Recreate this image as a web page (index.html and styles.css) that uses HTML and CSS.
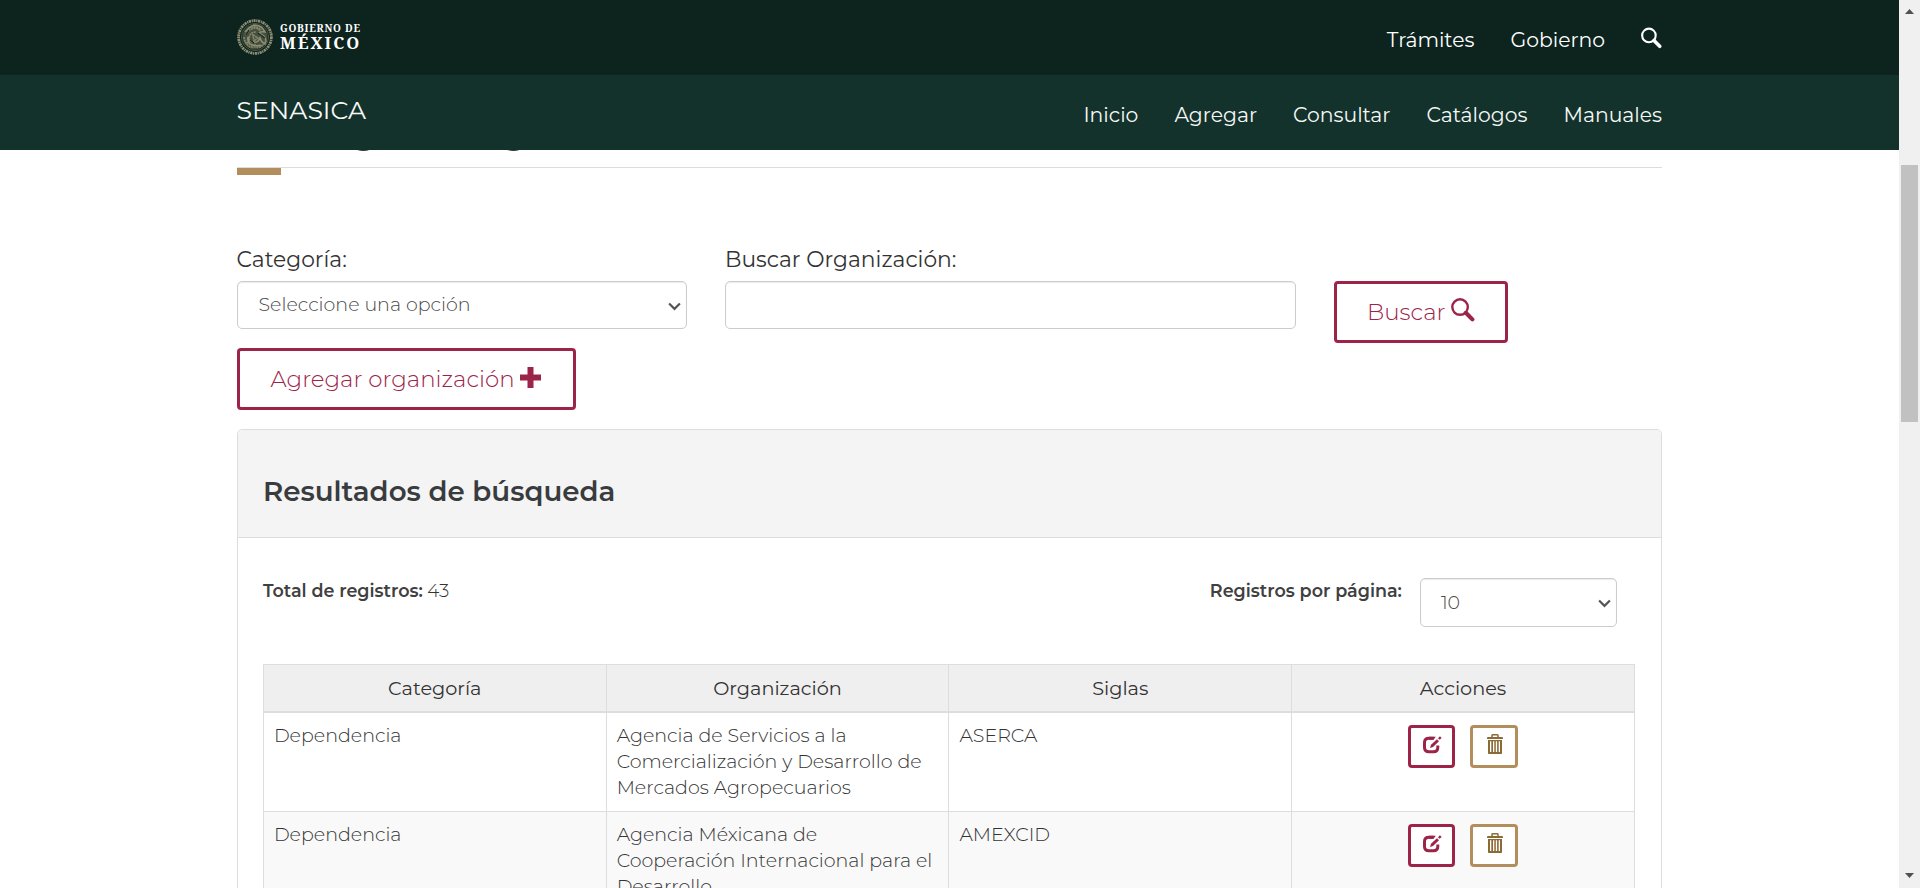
FILE: index.html
```html
<!DOCTYPE html>
<html lang="es">
<head>
<meta charset="utf-8">
<title>SENASICA</title>
<link rel="stylesheet" href="styles.css">
</head>
<body>
<svg class="defs" width="0" height="0">
  <symbol id="search" viewBox="0 0 22 22"><circle cx="8.3" cy="8.3" r="7.100" fill="none" stroke="currentColor" stroke-width="2.200"/><path d="M13.6 13.6l6 6" stroke="currentColor" stroke-width="3.800" stroke-linecap="round"/></symbol>
  <symbol id="edit" viewBox="0 0 19 18"><path d="M10.500 2.200H6Q1.500 2.200 1.500 6.500V11.500Q1.500 15.800 6 15.800H10.500Q14.800 15.800 14.800 11.500V9.500" fill="none" stroke="currentColor" stroke-width="3"/><path d="M6 .7h6.800L10.600 3.700H6z" fill="currentColor"/><path d="M7 12l1-3.200 6-5.600 2 2-6 5.800z" fill="currentColor"/><path d="M15 2.200L17 .3l1.600 1.700-1.900 1.800z" fill="currentColor"/></symbol>
  <symbol id="trash" viewBox="0 0 16 20"><path d="M5 3V1.500Q5 .8 6 .8h4q1 0 1 .7V3" fill="none" stroke="currentColor" stroke-width="1.500"/><path d="M0 5V3.600L1.200 3h13.600L16 3.600V5z" fill="currentColor"/><path fill-rule="evenodd" d="M1 6h14v13.300q0 .7-.7.7H1.700Q1 20 1 19.300zM3 7.200V18h1.300V7.200zM6 7.200V18h1.300V7.200zM8.800 7.200V18h1.300V7.200zM11.700 7.200V18H13V7.200z" fill="currentColor"/></symbol>
</svg>
<div class="window">
  <div class="page">
    <header class="top">
      <div class="brand">
        <svg class="seal" viewBox="0 0 36 36" fill="none" stroke="#8f8f74">
          <circle cx="18" cy="18" r="16.400" stroke-width="2.800" stroke-dasharray="2.200 .7 1.200 .6"/>
          <circle cx="18" cy="18" r="12.500" stroke="none" fill="#454f3f"/>
          <circle cx="18" cy="18" r="13.600" stroke="#5b644f" stroke-width=".8"/>
          <path d="M8 13q4-5 9-7 8 0 11 7-4-1-6 1l5 3q3 4 1 8-4-2-5-6-2 5-6 4-5 0-6-5-1 4 2 7 6 3 11 1" stroke-width="1.500"/>
          <path d="M7 18q1 7 6 10h10q4-2 6-6M9 16q2-5 8-7 5 0 7 4M12 19q1-6 7-6M10 23q4 4 9 3M14 8q6-1 10 3M16 16l5 3-4 3z" stroke="#85876b" stroke-width="1.700" stroke-dasharray="2 .6"/>
          <path d="M21 14l7 5M12 11l-3 5M13 21l4 3" stroke="#17291f" stroke-width="1.300"/>
        </svg>
        <div class="brand-text"><span class="gob">GOBIERNO DE</span><span class="mex">MÉXICO</span></div>
      </div>
      <nav class="links links-top"><a>Trámites</a><a>Gobierno</a><svg class="top-search"><use href="#search"/></svg></nav>
    </header>
    <header class="sub">
      <div class="site">SENASICA</div>
      <nav class="links"><a>Inicio</a><a>Agregar</a><a>Consultar</a><a>Catálogos</a><a>Manuales</a></nav>
    </header>
    <main class="content">
      <div class="title-clip"><h1>Catálogo de organizaciones</h1></div>
      <div class="rule"></div>
      <form class="filters">
        <div class="field cat"><label>Categoría:</label><div class="control">Seleccione una opción<svg class="chev" viewBox="0 0 12 8"><path d="M1 1.200l5 5 5-5"/></svg></div></div>
        <div class="field org"><label>Buscar Organización:</label><div class="control"></div></div>
        <div class="btn search-btn">Buscar<svg class="btn-search"><use href="#search"/></svg></div>
      </form>
      <div class="btn add-btn">Agregar organización<svg class="plus" viewBox="0 0 21 21"><path d="M7.500 0h6v7.500H21v6h-7.500V21h-6v-7.500H0v-6h7.500z" fill="currentColor"/></svg></div>
      <section class="panel">
        <div class="panel-head"><h2>Resultados de búsqueda</h2></div>
        <div class="panel-body">
          <div class="bar">
            <div class="total"><b>Total de registros:</b> <span>43</span></div>
            <div class="per"><b>Registros por página:</b><div class="control">10<svg class="chev" viewBox="0 0 12 8"><path d="M1 1.200l5 5 5-5"/></svg></div></div>
          </div>
          <table class="grid">
            <thead><tr><th>Categoría</th><th>Organización</th><th>Siglas</th><th>Acciones</th></tr></thead>
            <tbody>
              <tr><td>Dependencia</td><td>Agencia de Servicios a la<br>Comercialización y Desarrollo de<br>Mercados Agropecuarios</td><td>ASERCA</td>
                <td><div class="acts"><span class="act edit"><svg><use href="#edit"/></svg></span><span class="act del"><svg><use href="#trash"/></svg></span></div></td></tr>
              <tr><td>Dependencia</td><td>Agencia Méxicana de<br>Cooperación Internacional para el<br>Desarrollo</td><td>AMEXCID</td>
                <td><div class="acts"><span class="act edit"><svg><use href="#edit"/></svg></span><span class="act del"><svg><use href="#trash"/></svg></span></div></td></tr>
            </tbody>
          </table>
        </div>
      </section>
    </main>
  </div>
  <aside class="scroll">
    <svg class="arrow" viewBox="0 0 9 5"><path d="M0 5l4.500-5L9 5z"/></svg>
    <div class="thumb"></div>
    <svg class="arrow down" viewBox="0 0 9 5"><path d="M0 0l4.500 5L9 0z"/></svg>
  </aside>
</div>
</body>
</html>
```
FILE: styles.css
```css
* { box-sizing: border-box; }
body { margin: 0; background: #fff; color: #333; font-family: Montserrat, Inter, sans-serif; font-size: 19.050px; font-weight: 350; line-height: 26px; overflow: hidden; }
.defs { display: block; }
.window { display: flex; height: 888px; overflow: hidden; }
.page { flex: 1; min-width: 0; overflow: hidden; }

.top, .sub { display: flex; justify-content: space-between; height: 75px; padding: 0 237px; color: #fff; }
.top { background: #0c231e; }
.sub { background: #13322b; color: #f6f8f7; }
.brand { display: flex; gap: 7px; padding-top: 19px; }
.seal { width: 36px; height: 36px; }
.brand-text { display: flex; flex-direction: column; padding-top: 3px; font-family: "Noto Serif", serif; font-weight: 700; color: #fff; }
.gob { font-size: 10px; line-height: 12px; letter-spacing: .75px; }
.mex { font-size: 16.500px; line-height: 17px; letter-spacing: 2px; }
.links { display: flex; align-items: flex-start; padding-top: 27px; font-size: 20.350px; font-weight: 400; gap: 36px; }
.top-search { width: 21px; height: 22px; }
.site { font-size: 25.200px; font-weight: 400; line-height: 30px; padding-top: 20px; margin-left: -.5px; }

.content { width: 1425.500px; margin-left: 236.500px; }
.title-clip { height: 17px; overflow: hidden; }
.title-clip h1 { margin: -27px 0 0; font-size: 36px; line-height: 17px; font-weight: 600; letter-spacing: -.4px; color: #393c3e; }
.rule { height: 8px; border-top: 1px solid #ddd; }
.rule::before { content: ""; display: block; width: 44px; height: 7px; background: #b38e5d; }
.filters { display: flex; align-items: flex-start; margin-top: 71px; height: 97px; }
.field label { display: block; height: 35px; line-height: 26px; font-size: 21.800px; font-weight: 400; }
.control { position: relative; height: 48px; border: 1px solid #ccc; border-radius: 5px; padding-left: 21px; line-height: 46px; color: #4a4a4a; background: #fff; box-shadow: inset 0 1px 1px rgba(0,0,0,.08); }
.cat { width: 450.500px; }
.org { width: 571px; margin-left: 38px; }
.chev { position: absolute; right: 5px; top: 20px; width: 13px; height: 9px; fill: none; stroke: #555; stroke-width: 2; }
.btn { display: flex; align-items: center; height: 62px; border: 3px solid #9d2449; border-radius: 4px; color: #9d2449; font-size: 22.900px; background: #fff; }
.search-btn { width: 174px; margin: 35px 0 0 38px; padding-left: 30px; }
.btn-search { width: 24px; height: 24px; margin: -5px 0 0 5px; }
.add-btn { width: 339px; margin-top: 5px; padding-left: 31px; }
.plus { width: 21px; height: 21px; margin: -3px 0 0 5px; }

.panel { margin-top: 19px; height: 600px; border: 1px solid #ddd; border-radius: 5px; }
.panel-head { height: 108px; padding: 41px 25.500px 0; background: #f4f4f4; border-bottom: 1px solid #ddd; border-radius: 4px 4px 0 0; }
.panel-head h2 { margin: 0; font-size: 27.700px; line-height: 40px; font-weight: 600; color: #393c3e; }
.panel-body { padding: 40px 0 0 25.400px; }
.bar { display: flex; justify-content: space-between; width: 1372px; height: 86px; font-size: 17.550px; }
.bar b { font-weight: 600; color: #404041; }
.total span { font-size: 18.400px; }
.per { display: flex; margin-right: 18px; gap: 18px; }
.per .control { width: 197px; height: 49px; font-size: 19px; line-height: 48px; padding-left: 20px; }

.grid { width: 1372px; table-layout: fixed; border-spacing: 0; border: solid #ddd; border-width: 1px 0 0 1px; }
.grid th { height: 48px; padding: 0; background: #efefef; font-size: 19.300px; font-weight: 400; border: solid #ddd; border-width: 0 1px 2px 0; }
.grid td { height: 99px; padding: 10px; vertical-align: top; border: solid #ddd; border-width: 0 1px 1px 0; white-space: nowrap; }
.grid tr:nth-child(2) td { background: #f9f9f9; }
.acts { display: flex; justify-content: center; gap: 15px; padding-top: 2px; }
.act { display: block; height: 43px; border: 3px solid; border-radius: 4px; background: #fff; }
.act svg { display: block; }
.edit { width: 47px; color: #9d2449; padding: 8px 0 0 12px; }
.edit svg { width: 19px; height: 18px; }
.del { width: 48px; border-color: #b38e5d; color: #8a6a35; padding: 6px 0 0 14px; }
.del svg { width: 16px; height: 20px; }

.scroll { display: flex; flex-direction: column; width: 21px; background: #f0f0f0; padding: 9px 4px 10px 2px; }
.arrow { width: 9px; height: 5px; margin-left: 4px; fill: #505050; }
.thumb { width: 17px; height: 257px; margin-top: 151px; background: #c1c1c1; }
.down { margin-top: auto; }
```
